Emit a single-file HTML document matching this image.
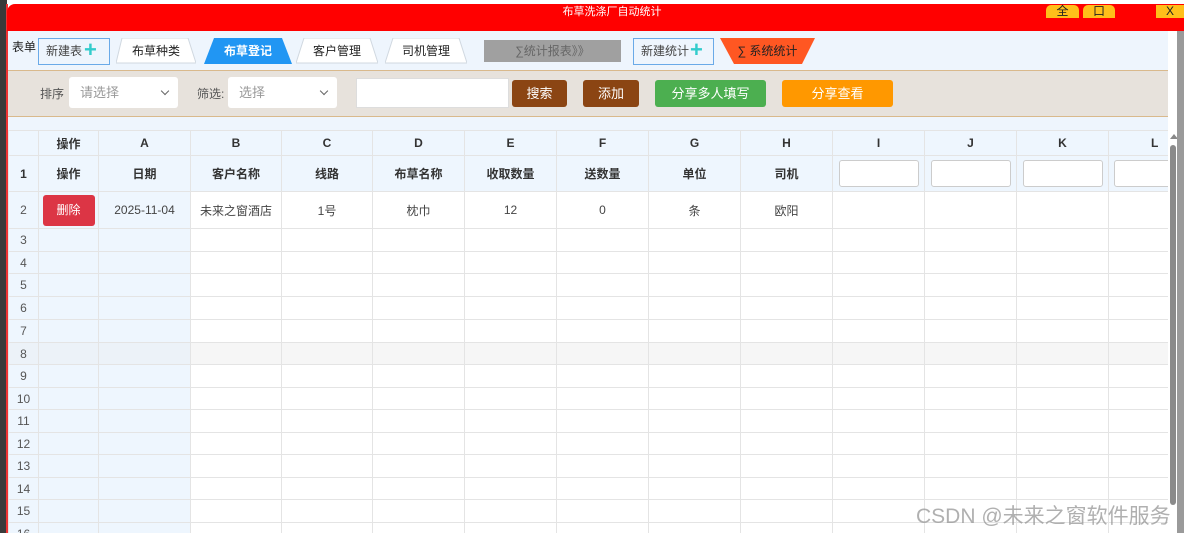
<!DOCTYPE html>
<html><head><meta charset="utf-8"><style>
*{box-sizing:border-box;margin:0;padding:0}
body{width:1184px;height:533px;overflow:hidden;background:#fff;font-family:"Liberation Sans","Noto Sans CJK SC",sans-serif;position:relative;font-size:12px;color:#333}
.a{position:absolute}
.tab{position:absolute;top:38px;height:26px;line-height:26px;text-align:center;font-size:12px;color:#222}
.tab svg{position:absolute;left:0;top:0}
.tab span{position:relative}
.btn{position:absolute;top:80px;height:27px;line-height:27px;color:#fff;text-align:center;border-radius:3px;font-size:13px}
.sel{position:absolute;top:77px;height:31px;background:#fff;border-radius:3px;color:#999;padding-left:11px;line-height:31px;font-size:13px}
.sel i{position:absolute;right:10px;top:11px;width:6px;height:6px;border-right:1.5px solid #666;border-bottom:1.5px solid #666;transform:rotate(45deg)}
.wrap{position:absolute;left:8px;top:130px;width:1160px;height:403px;overflow:hidden}
table{border-collapse:collapse;table-layout:fixed;width:1252px}
td{border:1px solid #e4e4e4;text-align:center;padding:0;font-size:12px;color:#444;overflow:hidden;white-space:nowrap}
tr.h td{background:#eef6fe;font-weight:bold;color:#333}
td.n{background:#eef6fe;color:#555;font-size:12px}
td.b{background:#eef6fe}
tr.g td{background:#f6f6f6}
tr.g td.n,tr.g td.b{background:#ecf2f8}
.inp{display:inline-block;width:80px;height:27px;border:1px solid #ccc;border-radius:3px;background:#fff;vertical-align:middle}
</style></head><body>
<div class="a" style="left:0;top:0;width:7px;height:533px;background:#3a3a3a"></div>
<div class="a" style="left:6px;top:4px;width:2px;height:529px;background:#e33"></div>
<div class="a" style="left:7px;top:4px;width:1177px;height:27px;background:#ff0000;border-top-left-radius:8px"></div>
<div class="a" style="left:7px;top:5px;width:1210px;text-align:center;color:#fff;font-size:11px;line-height:14px">布草洗涤厂自动统计</div>
<div class="a" style="left:1046px;top:5px;width:33px;height:13px;background:#ffbf1a;border-radius:5px 5px 0 0;text-align:center;font-size:12px;line-height:13px;color:#222">全</div>
<div class="a" style="left:1083px;top:5px;width:32px;height:13px;background:#ffbf1a;border-radius:5px 5px 0 0;text-align:center;font-size:12px;line-height:13px;color:#222">口</div>
<div class="a" style="left:1156px;top:5px;width:28px;height:13px;background:#ffbf1a;text-align:center;font-size:12px;line-height:13px;color:#222">X</div>
<div class="a" style="left:8px;top:31px;width:1176px;height:40px;background:#eef5fd"></div>
<div class="a" style="left:12px;top:38px;font-size:12px;color:#222">表单</div>
<div class="a" style="left:38px;top:38px;width:72px;height:27px;border:1px solid #6aaae8;background:#eef5fd;font-size:12px;color:#444;line-height:25px;padding-left:7px">新建表<span style="color:#3cc;font-size:22px;font-weight:bold;position:absolute;left:45px;top:-2px">+</span></div>
<div class="tab" style="left:116px;width:80px"><svg width="80" height="26"><polygon points="6,0 72,0 80,25 0,25" fill="#fff" stroke="#d0d8e0"/></svg><span>布草种类</span></div>
<div class="tab" style="left:204px;width:88px;color:#fff;font-weight:bold"><svg width="88" height="26"><polygon points="10,0 78,0 88,26 0,26" fill="#2196f3"/></svg><span>布草登记</span></div>
<div class="tab" style="left:296px;width:82px"><svg width="82" height="26"><polygon points="8,0 74,0 82,25 0,25" fill="#fff" stroke="#d0d8e0"/></svg><span>客户管理</span></div>
<div class="tab" style="left:385px;width:82px"><svg width="82" height="26"><polygon points="8,0 74,0 82,25 0,25" fill="#fff" stroke="#d0d8e0"/></svg><span>司机管理</span></div>
<div class="a" style="left:484px;top:40px;width:137px;height:22px;background:#a0a0a0;color:#666;text-align:center;line-height:22px;font-size:12px">∑统计报表》》</div>
<div class="a" style="left:633px;top:38px;width:81px;height:27px;border:1px solid #6aaae8;font-size:12px;color:#444;line-height:25px;padding-left:7px">新建统计<span style="color:#3cc;font-size:22px;font-weight:bold;position:absolute;left:56px;top:-2px">+</span></div>
<div class="tab" style="left:720px;width:95px"><svg width="95" height="26"><polygon points="0,0 95,0 82,26 14,26" fill="#ff5722"/></svg><span>∑ 系统统计</span></div>
<div class="a" style="left:8px;top:70px;width:1166px;height:47px;background:#e7e2dc;border-top:1px solid #d9b98c;border-bottom:1px solid #d9b98c"></div>
<div class="a" style="left:8px;top:117px;width:1166px;height:13px;background:#eef5fd"></div>
<div class="a" style="left:40px;top:85px;font-size:12px;color:#555">排序</div>
<div class="sel" style="left:69px;width:109px">请选择<i></i></div>
<div class="a" style="left:197px;top:85px;font-size:12px;color:#555">筛选:</div>
<div class="sel" style="left:228px;width:109px">选择<i></i></div>
<div class="a" style="left:356px;top:78px;width:153px;height:30px;background:#fff;border:1px solid #ddd"></div>
<div class="btn" style="left:512px;width:55px;background:#8b4513">搜索</div>
<div class="btn" style="left:583px;width:56px;background:#8b4513">添加</div>
<div class="btn" style="left:655px;width:111px;background:#4caf50">分享多人填写</div>
<div class="btn" style="left:782px;width:111px;background:#ff9800">分享查看</div>
<div class="wrap"><table>
<colgroup><col style="width:30px"><col style="width:60px"><col style="width:92px"><col style="width:91px"><col style="width:91px"><col style="width:92px"><col style="width:92px"><col style="width:92px"><col style="width:92px"><col style="width:92px"><col style="width:92px"><col style="width:92px"><col style="width:92px"><col style="width:152px"></colgroup>
<tr class="h" style="height:25px"><td></td><td>操作</td><td>A</td><td>B</td><td>C</td><td>D</td><td>E</td><td>F</td><td>G</td><td>H</td><td>I</td><td>J</td><td>K</td><td style="text-align:left;padding-left:42px">L</td></tr>
<tr class="h" style="height:36px"><td>1</td><td>操作</td><td>日期</td><td>客户名称</td><td>线路</td><td>布草名称</td><td>收取数量</td><td>送数量</td><td>单位</td><td>司机</td><td><span class="inp"></span></td><td><span class="inp"></span></td><td><span class="inp"></span></td><td style="text-align:left;padding-left:5px"><span class="inp"></span></td></tr>
<tr style="height:37px"><td class="n">2</td><td class="b"><span style="display:inline-block;width:52px;height:31px;line-height:31px;background:#dc3545;color:#fff;border-radius:3px">删除</span></td><td class="b">2025-11-04</td><td>未来之窗酒店</td><td>1号</td><td>枕巾</td><td>12</td><td>0</td><td>条</td><td>欧阳</td><td></td><td></td><td></td><td></td></tr>
<tr style="height:23px"><td class="n">3</td><td class="b"></td><td class="b"></td><td></td><td></td><td></td><td></td><td></td><td></td><td></td><td></td><td></td><td></td><td></td></tr>
<tr style="height:22px"><td class="n">4</td><td class="b"></td><td class="b"></td><td></td><td></td><td></td><td></td><td></td><td></td><td></td><td></td><td></td><td></td><td></td></tr>
<tr style="height:23px"><td class="n">5</td><td class="b"></td><td class="b"></td><td></td><td></td><td></td><td></td><td></td><td></td><td></td><td></td><td></td><td></td><td></td></tr>
<tr style="height:23px"><td class="n">6</td><td class="b"></td><td class="b"></td><td></td><td></td><td></td><td></td><td></td><td></td><td></td><td></td><td></td><td></td><td></td></tr>
<tr style="height:23px"><td class="n">7</td><td class="b"></td><td class="b"></td><td></td><td></td><td></td><td></td><td></td><td></td><td></td><td></td><td></td><td></td><td></td></tr>
<tr class="g" style="height:22px"><td class="n">8</td><td class="b"></td><td class="b"></td><td></td><td></td><td></td><td></td><td></td><td></td><td></td><td></td><td></td><td></td><td></td></tr>
<tr style="height:23px"><td class="n">9</td><td class="b"></td><td class="b"></td><td></td><td></td><td></td><td></td><td></td><td></td><td></td><td></td><td></td><td></td><td></td></tr>
<tr style="height:22px"><td class="n">10</td><td class="b"></td><td class="b"></td><td></td><td></td><td></td><td></td><td></td><td></td><td></td><td></td><td></td><td></td><td></td></tr>
<tr style="height:23px"><td class="n">11</td><td class="b"></td><td class="b"></td><td></td><td></td><td></td><td></td><td></td><td></td><td></td><td></td><td></td><td></td><td></td></tr>
<tr style="height:22px"><td class="n">12</td><td class="b"></td><td class="b"></td><td></td><td></td><td></td><td></td><td></td><td></td><td></td><td></td><td></td><td></td><td></td></tr>
<tr style="height:23px"><td class="n">13</td><td class="b"></td><td class="b"></td><td></td><td></td><td></td><td></td><td></td><td></td><td></td><td></td><td></td><td></td><td></td></tr>
<tr style="height:22px"><td class="n">14</td><td class="b"></td><td class="b"></td><td></td><td></td><td></td><td></td><td></td><td></td><td></td><td></td><td></td><td></td><td></td></tr>
<tr style="height:23px"><td class="n">15</td><td class="b"></td><td class="b"></td><td></td><td></td><td></td><td></td><td></td><td></td><td></td><td></td><td></td><td></td><td></td></tr>
<tr style="height:23px"><td class="n">16</td><td class="b"></td><td class="b"></td><td></td><td></td><td></td><td></td><td></td><td></td><td></td><td></td><td></td><td></td><td></td></tr>
</table></div>
<div class="a" style="left:1168px;top:31px;width:16px;height:502px;background:#fff"></div>
<div class="a" style="left:1170px;top:134px;width:0;height:0;border-left:4px solid transparent;border-right:4px solid transparent;border-bottom:5px solid #888"></div>
<div class="a" style="left:1170px;top:145px;width:6px;height:360px;background:#8a8a8a;border-radius:3px"></div>
<div class="a" style="left:1177px;top:31px;width:7px;height:502px;background:#9a9a9a"></div>
<div class="a" style="left:916px;top:500px;font-size:21px;color:rgba(150,150,150,0.75);white-space:nowrap">CSDN @未来之窗软件服务</div>
</body></html>
